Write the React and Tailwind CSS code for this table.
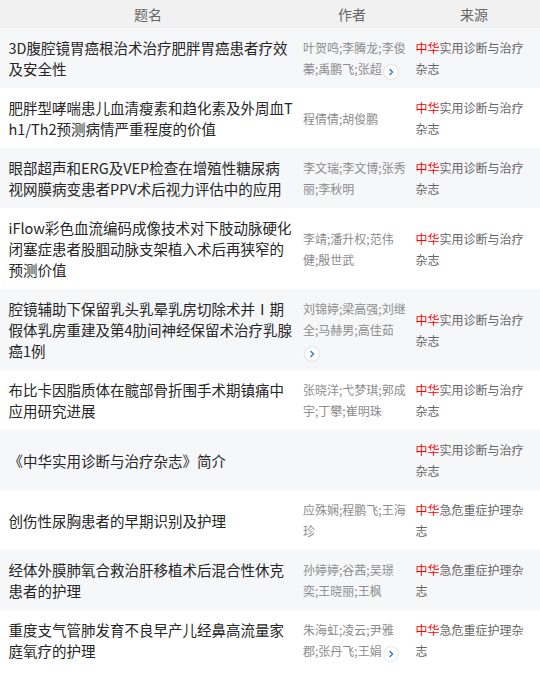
import React from 'react';

const ZH = '中华实用诊断与治疗杂志';
const JW = '中华急危重症护理杂志';

const rows = [
  {
    title: ['3D腹腔镜胃癌根治术治疗肥胖胃癌患者疗效', '及安全性'],
    authors: ['叶贺鸣;李腾龙;李俊', '蓁;禹鹏飞;张超'],
    more: 'inline',
    source: ZH,
  },
  {
    title: ['肥胖型哮喘患儿血清瘦素和趋化素及外周血T', 'h1/Th2预测病情严重程度的价值'],
    authors: ['程倩倩;胡俊鹏'],
    source: ZH,
  },
  {
    title: ['眼部超声和ERG及VEP检查在增殖性糖尿病', '视网膜病变患者PPV术后视力评估中的应用'],
    authors: ['李文瑞;李文博;张秀', '丽;李秋明'],
    source: ZH,
  },
  {
    title: ['iFlow彩色血流编码成像技术对下肢动脉硬化', '闭塞症患者股腘动脉支架植入术后再狭窄的', '预测价值'],
    authors: ['李靖;潘升权;范伟', '健;殷世武'],
    source: ZH,
  },
  {
    title: ['腔镜辅助下保留乳头乳晕乳房切除术并Ⅰ期', '假体乳房重建及第4肋间神经保留术治疗乳腺', '癌1例'],
    authors: ['刘锦婷;梁高强;刘继', '全;马赫男;高佳茹'],
    more: 'line',
    source: ZH,
  },
  {
    title: ['布比卡因脂质体在髋部骨折围手术期镇痛中', '应用研究进展'],
    authors: ['张晓洋;弋梦琪;郭成', '宇;丁攀;崔明珠'],
    source: ZH,
  },
  {
    title: ['《中华实用诊断与治疗杂志》简介'],
    authors: [],
    source: ZH,
  },
  {
    title: ['创伤性尿胸患者的早期识别及护理'],
    authors: ['应殊娴;程鹏飞;王海', '珍'],
    source: JW,
  },
  {
    title: ['经体外膜肺氧合救治肝移植术后混合性休克', '患者的护理'],
    authors: ['孙婷婷;谷茜;吴璟', '奕;王晓丽;王枫'],
    source: JW,
  },
  {
    title: ['重度支气管肺发育不良早产儿经鼻高流量家', '庭氧疗的护理'],
    authors: ['朱海虹;凌云;尹雅', '郡;张丹飞;王娟'],
    more: 'inline',
    source: JW,
  },
];

const MoreIcon = () => (
  <span className="inline-flex items-center justify-center w-[14px] h-[14px] ml-[2px] align-[-2px] rounded-full bg-white shadow-[0_0_2px_rgba(0,0,0,0.25)]">
    <svg width="8" height="8" viewBox="0 0 8 8" fill="none">
      <path d="M3 1.5 L5.5 4 L3 6.5" stroke="#2b7cd3" strokeWidth="1.5" strokeLinecap="round" strokeLinejoin="round" />
    </svg>
  </span>
);

const App = () => {
  return (
    <div
      className="w-[540px] min-h-[674px] bg-white"
      style={{ fontFamily: '"Noto Sans CJK SC", "Noto Sans", sans-serif' }}
    >
      <div className="grid grid-cols-[296px_112px_1fr] h-[28px] bg-[#f1f1f1] text-[14px] leading-[28px] text-[#666]">
        <div className="text-center">题名</div>
        <div className="text-center">作者</div>
        <div className="text-center">来源</div>
      </div>

      {rows.map((row, idx) => (
        <div
          key={idx}
          className={
            'grid grid-cols-[296px_112px_1fr] items-center py-[9px] ' +
            (idx % 2 === 0 ? 'bg-[#f6f7f9]' : 'bg-white')
          }
        >
          <div className="pl-[8.5px] text-[14.5px] leading-[21px] text-[#262626] whitespace-nowrap">
            {row.title.map((line, i) => (
              <div key={i}>{line}</div>
            ))}
          </div>
          <div className="pl-[7px] text-[12px] leading-[21px] text-[#8c8c8c] whitespace-nowrap">
            {row.authors.map((line, i) => (
              <div key={i}>
                {line}
                {row.more === 'inline' && i === row.authors.length - 1 && <MoreIcon />}
              </div>
            ))}
            {row.more === 'line' && (
              <div>
                <MoreIcon />
              </div>
            )}
          </div>
          <div className="pl-[7.5px] text-[12px] leading-[21px] text-[#666] whitespace-nowrap">
            <div>
              <span className="text-[#ff0000]">中华</span>
              {row.source.slice(2, row.source.length - (row.source === ZH ? 2 : 1))}
            </div>
            <div>{row.source.slice(row.source.length - (row.source === ZH ? 2 : 1))}</div>
          </div>
        </div>
      ))}
    </div>
  );
};

export default App;
